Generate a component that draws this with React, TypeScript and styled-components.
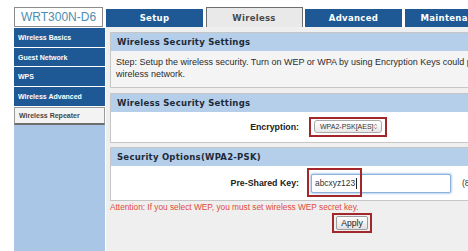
import styled, { createGlobalStyle } from 'styled-components'

const color = {
  navy: '#1e5995',
  sky: '#b5cee9',
  skyFill: '#a9c6e6',
  panel: '#efefef',
  line: '#c6c6c6',
  mark: '#a3262a',
  alert: '#df4a3c',
  ink: '#1d2a38',
}

const GlobalStyle = createGlobalStyle`
  html, body {
    margin: 0;
    background: #ffffff;
    overflow: hidden;
  }
`

const Page = styled.div`
  display: flex;
  width: 800px;
  height: 251px;
  box-sizing: border-box;
  padding: 7px 0 0 14px;
  font-family: 'Liberation Sans', Arial, sans-serif;
`

const Side = styled.aside`
  width: 91px;
  display: flex;
  flex-direction: column;
`

const Logo = styled.div`
  height: 20px;
  margin-right: 2px;
  box-sizing: border-box;
  border: 1px solid #8c8c8c;
  background: #ffffff;
  color: #4f8db0;
  font-size: 12px;
  display: flex;
  align-items: center;
  justify-content: center;
`

const NavItem = styled.div<{ $active?: boolean }>`
  height: 18.7px;
  margin-top: 1px;
  box-sizing: border-box;
  padding-left: 4px;
  display: flex;
  align-items: center;
  font-size: 7px;
  font-weight: bold;
  background: ${(p) => (p.$active ? '#f3f3f3' : color.navy)};
  color: ${(p) => (p.$active ? '#474747' : '#ffffff')};
  border: ${(p) => (p.$active ? '1px solid #9a9a9a' : 'none')};
  border-bottom: ${(p) => (p.$active ? '2px solid #6f6f6f' : 'none')};
`

const SideFill = styled.div`
  flex: 1;
  background: ${color.skyFill};
`

const Main = styled.main`
  flex: 1;
  margin-left: 1px;
  display: flex;
  flex-direction: column;
`

const Tabs = styled.nav`
  height: 20px;
  display: flex;
  align-items: flex-end;
  gap: 2.5px;
`

const Tab = styled.div<{ $active?: boolean }>`
  width: 97px;
  flex-shrink: 0;
  height: ${(p) => (p.$active ? '20px' : '18px')};
  box-sizing: border-box;
  display: flex;
  align-items: center;
  justify-content: center;
  white-space: nowrap;
  font-family: 'DejaVu Sans', Verdana, sans-serif;
  font-size: 8.5px;
  font-weight: bold;
  letter-spacing: 0.3px;
  background: ${(p) => (p.$active ? '#e9e9e9' : color.navy)};
  color: ${(p) => (p.$active ? '#4a4a4a' : '#ffffff')};
  border: ${(p) => (p.$active ? '1px solid #6e6e6e' : 'none')};
  border-bottom: none;
`

const Content = styled.div`
  flex: 1;
  background: ${color.panel};
  padding: 5px 0 0 4px;
  display: flex;
  flex-direction: column;
  width: 500px;
`

const Section = styled.section`
  width: 484px;
  box-sizing: border-box;
  border: 1px solid ${color.line};
  background: #ffffff;
  margin-bottom: 4.5px;
`

const SectionHead = styled.h3`
  margin: 0;
  height: 18px;
  padding-left: 6px;
  display: flex;
  align-items: center;
  background: ${color.sky};
  color: ${color.ink};
  font-family: 'DejaVu Sans', Verdana, sans-serif;
  font-size: 8.5px;
  font-weight: bold;
  letter-spacing: 0.25px;
`

const Desc = styled.p`
  margin: 0;
  height: 36px;
  box-sizing: border-box;
  padding: 5px 5px;
  background: #f4f4f4;
  color: #2b2b2b;
  font-size: 9px;
  line-height: 12px;
  white-space: nowrap;
  overflow: hidden;
`

const FormBody = styled.div<{ $h: number }>`
  height: ${(p) => p.$h}px;
  display: flex;
  align-items: center;
  white-space: nowrap;
`

const Label = styled.label`
  width: 188px;
  flex-shrink: 0;
  text-align: right;
  font-size: 8.8px;
  font-weight: bold;
  color: #222;
  margin-right: 10px;
`

const Mark = styled.div`
  border: 2px solid ${color.mark};
  padding: 1.5px 3px;
  display: inline-flex;
`

const Select = styled.div`
  width: 68px;
  height: 13px;
  box-sizing: border-box;
  border: 1px solid #a9a9a9;
  border-radius: 3px;
  background: linear-gradient(#ffffff, #e8e8e8);
  display: flex;
  align-items: center;
  justify-content: space-between;
  padding: 0 4px 0 5px;
  font-size: 7px;
  color: #333;
  white-space: nowrap;
`

const KeyField = styled.div`
  position: relative;
  margin-left: 2px;
`

const Input = styled.div`
  width: 140px;
  height: 19px;
  box-sizing: border-box;
  border: 1px solid #8eb1dc;
  box-shadow: 0 0 2px 1px #b9d1ef;
  border-radius: 2px;
  background: #ffffff;
  padding-left: 3px;
  display: flex;
  align-items: center;
  font-size: 8.4px;
  color: #333;
`

const Caret = styled.span`
  width: 1px;
  height: 11px;
  background: #222;
  margin-left: 1px;
`

const KeyMark = styled.div`
  position: absolute;
  left: -4px;
  top: -6px;
  width: 55px;
  height: 29px;
  box-sizing: border-box;
  border: 2px solid ${color.mark};
`

const Hint = styled.span`
  margin-left: 11px;
  font-size: 8.6px;
  color: #333;
`

const Attention = styled.div`
  margin-top: -3.5px;
  height: 11px;
  font-size: 8.3px;
  line-height: 11px;
  color: ${color.alert};
  white-space: nowrap;
`

const Actions = styled.div`
  width: 484px;
  display: flex;
  justify-content: center;
`

const ApplyMark = styled.div`
  border: 2px solid ${color.mark};
  padding: 1px 2px;
  display: inline-flex;
`

const Button = styled.button`
  height: 14px;
  padding: 0 4px;
  border: 1px solid #9c9c9c;
  border-radius: 2px;
  background: linear-gradient(#fdfdfd, #e1e1e1);
  font-family: 'Liberation Sans', Arial, sans-serif;
  font-size: 8.6px;
  color: #222;
  line-height: 12px;
`

const Chevrons = () => (
  <svg width="4" height="7" viewBox="0 0 4 7">
    <path d="M0.5 2.5 L2 1 L3.5 2.5 M0.5 4.5 L2 6 L3.5 4.5" stroke="#555" strokeWidth="0.9" fill="none" />
  </svg>
)

const navItems = ['Wireless Basics', 'Guest Network', 'WPS', 'Wireless Advanced', 'Wireless Repeater']
const tabs = ['Setup', 'Wireless', 'Advanced', 'Maintenance']

export default function App() {
  return (
    <>
      <GlobalStyle />
      <Page>
        <Side>
          <Logo>WRT300N-D6</Logo>
          {navItems.map((item) => (
            <NavItem key={item} $active={item === 'Wireless Repeater'}>
              {item}
            </NavItem>
          ))}
          <SideFill />
        </Side>
        <Main>
          <Tabs>
            {tabs.map((t) => (
              <Tab key={t} $active={t === 'Wireless'}>
                {t}
              </Tab>
            ))}
          </Tabs>
          <Content>
            <Section>
              <SectionHead>Wireless Security Settings</SectionHead>
              <Desc>
                Step: Setup the wireless security. Turn on WEP or WPA by using Encryption Keys could prevent any
                unauthorized access to your
                <br />
                wireless network.
              </Desc>
            </Section>
            <Section>
              <SectionHead>Wireless Security Settings</SectionHead>
              <FormBody $h={30}>
                <Label>Encryption:</Label>
                <Mark>
                  <Select>
                    <span>WPA2-PSK[AES]</span>
                    <Chevrons />
                  </Select>
                </Mark>
              </FormBody>
            </Section>
            <Section>
              <SectionHead>Security Options(WPA2-PSK)</SectionHead>
              <FormBody $h={34}>
                <Label>Pre-Shared Key:</Label>
                <KeyField>
                  <Input>
                    abcxyz123
                    <Caret />
                  </Input>
                  <KeyMark />
                </KeyField>
                <Hint>(8-63 characters or 64 hexadecimal digits)</Hint>
              </FormBody>
            </Section>
            <Attention>Attention: If you select WEP, you must set wireless WEP secret key.</Attention>
            <Actions>
              <ApplyMark>
                <Button>Apply</Button>
              </ApplyMark>
            </Actions>
          </Content>
        </Main>
      </Page>
    </>
  )
}
